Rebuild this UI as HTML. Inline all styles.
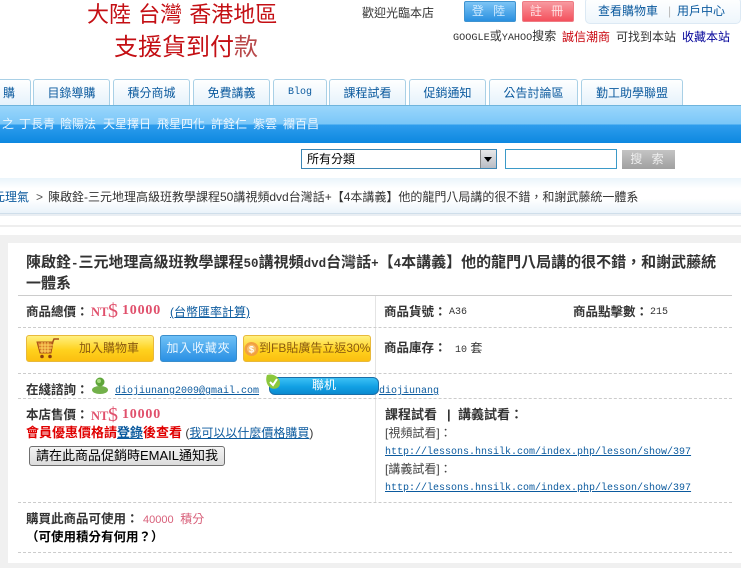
<!DOCTYPE html>
<html lang="zh-Hant"><head><meta charset="utf-8">
<style>
html,body{margin:0;padding:0;background:#fff}
body{width:741px;height:568px;position:relative;overflow:hidden;font-family:"Liberation Sans","WenQuanYi Zen Hei","Noto Sans CJK TC",sans-serif;font-size:12px;color:#333}
.a{position:absolute;white-space:nowrap;line-height:16px}
.tab{position:absolute;top:79px;height:26px;box-sizing:border-box;border:1px solid #a9d0e6;border-bottom:none;border-radius:3px 3px 0 0;background:linear-gradient(#fff,#e6f2fb);color:#0b5a9e;text-align:center;line-height:26px;font-size:12px}
.m{font-family:"Liberation Mono","WenQuanYi Zen Hei","Noto Sans CJK TC",monospace}
.b{font-weight:bold;color:#333;font-size:12.5px}
.d{position:absolute;height:0;border-top:1px dashed #ccc}
a{color:#0b5a9e;text-decoration:underline}
.pk{color:#e0506c;font-weight:bold;font-family:"Liberation Serif",serif}
.n{font-family:"Liberation Serif",serif;font-weight:bold;color:#e0506c;font-size:14px;letter-spacing:.8px}
.t{font-family:"Liberation Mono",monospace;font-size:12.5px}
</style></head><body>

<div class="a" style="left:87px;top:1px;font-size:22px;line-height:28px;color:#c40f14;word-spacing:1px">大陸 台灣 香港地區</div>
<div class="a" style="left:114px;top:34px;font-size:24px;line-height:28px;color:#c40f14">支援貨到付<span style="color:#b8484a">款</span></div>

<div class="a" style="left:362px;top:5px">歡迎光臨本店</div>
<div class="a" style="left:464px;top:1px;width:52px;height:21px;box-sizing:border-box;border:1px solid #3f93d0;border-radius:2px;background:linear-gradient(#7cc4f5,#2a90e0);color:#cfeaff;text-align:center;line-height:18px;letter-spacing:3px">登 陸</div>
<div class="a" style="left:522px;top:1px;width:52px;height:21px;box-sizing:border-box;border:1px solid #ee7c84;border-radius:2px;background:linear-gradient(#f79aa0,#f4505c);color:#ffe0e2;text-align:center;line-height:18px;letter-spacing:3px">註 冊</div>
<div class="a" style="left:585px;top:-3px;width:156px;height:27px;box-sizing:border-box;border:1px solid #dce9f4;border-radius:5px;background:linear-gradient(#fff,#eef6fc)"></div>
<div class="a" style="left:598px;top:3px;color:#0b5a9e">查看購物車</div>
<div class="a" style="left:668px;top:3px;color:#bbb">|</div>
<div class="a" style="left:677px;top:3px;color:#0b5a9e">用戶中心</div>
<div class="a m" style="left:453px;top:29px;font-size:12px"><span style="font-size:10.2px">GOOGLE</span>或<span style="font-size:10.2px">YAHOO</span>搜索</div>
<div class="a" style="left:562px;top:29px;color:#c8000a">誠信潮商</div>
<div class="a" style="left:616px;top:29px">可找到本站</div>
<div class="a" style="left:682px;top:29px;color:#000099">收藏本站</div>

<div class="tab" style="left:-40px;width:71px;text-align:right;padding-right:15px">購</div>
<div class="tab" style="left:33px;width:77px">目錄導購</div>
<div class="tab" style="left:113px;width:77px">積分商城</div>
<div class="tab" style="left:193px;width:77px">免費講義</div>
<div class="tab m" style="left:273px;width:54px;font-size:10px">Blog</div>
<div class="tab" style="left:329px;width:77px">課程試看</div>
<div class="tab" style="left:409px;width:77px">促銷通知</div>
<div class="tab" style="left:489px;width:89px">公告討論區</div>
<div class="tab" style="left:581px;width:102px">勤工助學聯盟</div>

<div class="a" style="left:0;top:105px;width:741px;height:38px;border-top:1px solid #6fb4dc;box-sizing:border-box;background:linear-gradient(#9ad6fb 0,#79c6f8 50%,#2f9ded 50%,#0d88e0 100%)"></div>
<div class="a" style="left:2px;top:116px;color:#eaf6ff">之</div>
<div class="a" style="left:19px;top:116px;color:#eaf6ff">丁長青</div>
<div class="a" style="left:60px;top:116px;color:#eaf6ff">陰陽法</div>
<div class="a" style="left:103px;top:116px;color:#eaf6ff">天星擇日</div>
<div class="a" style="left:157px;top:116px;color:#eaf6ff">飛星四化</div>
<div class="a" style="left:211px;top:116px;color:#eaf6ff">許銓仁</div>
<div class="a" style="left:253px;top:116px;color:#eaf6ff">紫雲</div>
<div class="a" style="left:283px;top:116px;color:#eaf6ff">襴百昌</div>

<div class="a" style="left:301px;top:149px;width:196px;height:20px;box-sizing:border-box;border:1px solid #3b86b4;background:#fff;padding-left:5px;line-height:18px;color:#000">所有分類</div>
<div class="a" style="left:480px;top:150px;width:16px;height:18px;background:linear-gradient(#e8e8e8,#b8bcc4);border-left:1px solid #888;box-sizing:border-box"></div>
<div class="a" style="left:484px;top:157px;width:0;height:0;border:4px solid transparent;border-top:5px solid #000;border-bottom:0"></div>
<div class="a" style="left:505px;top:149px;width:112px;height:20px;box-sizing:border-box;border:1px solid #3b9ac8;background:#fff"></div>
<div class="a" style="left:622px;top:150px;width:53px;height:19px;background:linear-gradient(#c4c4c4,#a0a0a0);color:#eee;text-align:center;line-height:19px;letter-spacing:3px">搜 索</div>

<div class="a" style="left:0;top:178px;width:741px;height:36px;border-bottom:1px solid #cfdeea;box-sizing:border-box;background:linear-gradient(#eaf4fb,#fff 30%,#fff 60%,#eaf3fa)"></div>
<div class="a" style="left:0;top:214px;width:741px;height:2px;background:#e9eef3"></div>
<div class="a" style="left:-7px;top:189px;color:#0b5a9e">元理氣</div>
<div class="a" style="left:36px;top:189px;color:#555">&gt;</div>
<div class="a" style="left:48px;top:189px;color:#333">陳啟銓-三元地理高級班教學課程50講視頻dvd台灣話+【4本講義】他的龍門八局講的很不錯，和謝武藤統一體系</div>

<div class="a" style="left:0;top:225px;width:741px;height:2px;background:#eee"></div>
<div class="a" style="left:0;top:235px;width:741px;height:333px;background:#f0f0f0"></div>
<div class="a" style="left:8px;top:243px;width:733px;height:320px;background:#fff"></div>

<div class="a" style="left:26px;top:253px;font-size:15px;line-height:19px;font-weight:bold;color:#333">陳啟銓<span class="t">-</span>三元地理高級班教學課程<span class="t">50</span>講視頻<span class="t">dvd</span>台灣話<span class="t">+</span>【<span class="t">4</span>本講義】他的龍門八局講的很不錯，和謝武藤統<br>一體系</div>

<div class="a" style="left:18px;top:295px;width:714px;height:1px;background:#ccc"></div>
<div class="a" style="left:375px;top:296px;width:1px;height:206px;background:#e4e4e4"></div>
<div class="d" style="left:18px;top:327px;width:714px"></div>
<div class="d" style="left:18px;top:373px;width:714px"></div>
<div class="d" style="left:18px;top:398px;width:714px"></div>
<div class="d" style="left:18px;top:502px;width:714px"></div>
<div class="d" style="left:18px;top:552px;width:714px"></div>

<div class="a b" style="left:26px;top:304px">商品總價：</div>
<div class="a pk" style="left:91px;top:304px;font-size:12.5px">NT</div>
<div class="a pk" style="left:108px;top:303px;font-size:20px;font-weight:normal">$</div>
<div class="a n" style="left:122px;top:303px">10000</div>
<div class="a" style="left:170px;top:304px"><a>(台幣匯率計算)</a></div>
<div class="a b" style="left:384px;top:304px">商品貨號：</div>
<div class="a m" style="left:449px;top:305px;font-size:10px">A36</div>
<div class="a b" style="left:573px;top:304px">商品點擊數：</div>
<div class="a m" style="left:650px;top:305px;font-size:10px">215</div>

<div class="a" style="left:26px;top:335px;width:128px;height:27px;box-sizing:border-box;border:1px solid #e8b93c;border-radius:3px;background:linear-gradient(#fff080,#ffd21e 55%,#fbbf10)"></div>
<svg class="a" style="left:36px;top:337px" width="24" height="23" viewBox="0 0 24 23"><path d="M1 5H17L15 16H4Z" fill="#d8802a" stroke="#a8521a"/><path d="M3 8H17M3 11H16M4 14H15M6 5V16M9 5V16M12 5V16" stroke="#ffd75e" fill="none"/><path d="M16 7L18 2H23" stroke="#a8521a" stroke-width="1.5" fill="none"/><circle cx="6" cy="19.500" r="1.800" fill="#8a4010"/><circle cx="14" cy="19.500" r="1.800" fill="#8a4010"/></svg>
<div class="a" style="left:79px;top:340px;color:#8a5a10">加入購物車</div>
<div class="a" style="left:160px;top:335px;width:77px;height:27px;box-sizing:border-box;border:1px solid #3a8ecc;border-radius:3px;background:linear-gradient(#6ec0f6,#2a90e4);color:#e8f6ff;text-align:center;line-height:24px;letter-spacing:.8px">加入收藏夾</div>
<div class="a" style="left:243px;top:335px;width:128px;height:27px;box-sizing:border-box;border:1px solid #e8b93c;border-radius:3px;background:linear-gradient(#fff080,#ffd21e 55%,#fbbf10)"></div>
<svg class="a" style="left:244px;top:341px" width="15" height="16" viewBox="0 0 15 16"><circle cx="7.500" cy="8" r="7" fill="#f2a040"/><circle cx="7.500" cy="8" r="4.500" fill="#f8c070"/><text x="5" y="11.500" font-size="9" font-family="Liberation Sans" fill="#fff" font-weight="bold">$</text></svg>
<div class="a" style="left:259px;top:340px;color:#8a5a10">到FB貼廣告立返30%</div>
<div class="a b" style="left:384px;top:340px">商品庫存：</div>
<div class="a" style="left:455px;top:340px"><span class="m" style="font-size:10px">10</span> 套</div>

<div class="a b" style="left:26px;top:382px">在綫諮詢：</div>
<svg class="a" style="left:91px;top:376px" width="18" height="18" viewBox="0 0 18 18"><ellipse cx="9" cy="14" rx="8" ry="4" fill="#72b04a"/><circle cx="9" cy="6" r="4.500" fill="#5fa63a"/><circle cx="8" cy="5" r="2" fill="#a8dc80"/></svg>
<div class="a m" style="left:115px;top:384px;font-size:10px"><a>diojiunang2009@gmail.com</a></div>
<div class="a" style="left:269px;top:377px;width:110px;height:18px;box-sizing:border-box;border:1px solid #1a6ea8;border-radius:6px;background:linear-gradient(#3cc0f4,#12a0e4 55%,#0a8ad0);color:#fff;text-align:center;line-height:14px;font-size:12px">聯机</div>
<svg class="a" style="left:265px;top:373px" width="17" height="18" viewBox="0 0 17 18"><path d="M2 2C8 0 15 4 15 10C15 15 10 17 6 15C2 13 0 7 2 2Z" fill="#8cc83c"/><path d="M5 9L8 12L12 6" stroke="#fff" stroke-width="2" fill="none"/></svg>
<div class="a m" style="left:379px;top:384px;font-size:10px"><a>diojiunang</a></div>

<div class="a b" style="left:26px;top:407px">本店售價：</div>
<div class="a pk" style="left:91px;top:408px;font-size:12.5px">NT</div>
<div class="a pk" style="left:108px;top:407px;font-size:20px;font-weight:normal">$</div>
<div class="a n" style="left:122px;top:407px">10000</div>
<div class="a" style="left:26px;top:425px"><b style="color:#e00000;font-size:13px">會員優惠價格請</b><a style="font-weight:bold;font-size:13px">登錄</a><b style="color:#e00000;font-size:13px">後查看</b> (<a>我可以以什麼價格購買</a>)</div>
<div class="a" style="left:29px;top:446px;width:196px;height:20px;box-sizing:border-box;border:1px solid #707070;border-radius:3px;background:linear-gradient(#f4f4f4,#dcdcdc);color:#000;text-align:center;line-height:18px;font-size:13px">請在此商品促銷時EMAIL通知我</div>

<div class="a b" style="left:385px;top:407px;font-size:13px">課程試看</div>
<div class="a b" style="left:447px;top:407px;font-size:13px">|</div>
<div class="a b" style="left:458px;top:407px;font-size:13px">講義試看：</div>
<div class="a" style="left:385px;top:425px;color:#444">[視頻試看]：</div>
<div class="a m" style="left:385px;top:445px;font-size:10px"><a>http://lessons.hnsilk.com/index.php/lesson/show/397</a></div>
<div class="a" style="left:385px;top:461px;color:#444">[講義試看]：</div>
<div class="a m" style="left:385px;top:481px;font-size:10px"><a>http://lessons.hnsilk.com/index.php/lesson/show/397</a></div>

<div class="a b" style="left:26px;top:511px">購買此商品可使用：</div>
<div class="a" style="left:143px;top:511px;color:#d8607a"><span style="font-size:11px">40000</span> &nbsp;積分</div>
<div class="a" style="left:26px;top:529px;font-weight:bold;color:#000;font-size:12.5px">（可使用積分有何用？）</div>

</body></html>
